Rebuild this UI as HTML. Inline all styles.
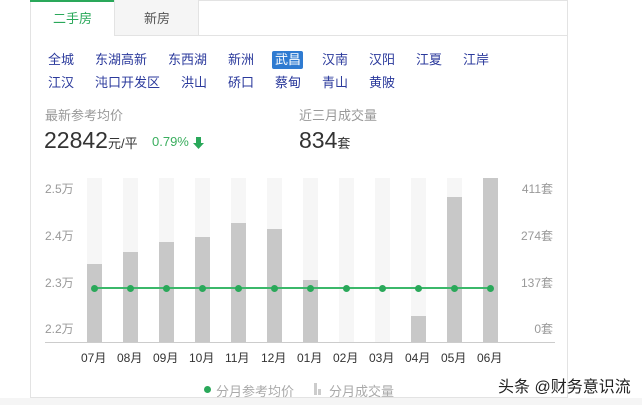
<!DOCTYPE html>
<html><head><meta charset="utf-8"><style>
body{margin:0;width:642px;height:405px;background:#fff;font-family:"Liberation Sans","Noto Sans CJK SC",sans-serif;position:relative;overflow:hidden}
.a{position:absolute;white-space:nowrap}
.d{font-size:13px;color:#2b3a9c;line-height:16px}
.g{color:#999;font-size:13px}
.bg{position:absolute;width:15px;top:178px;height:164px;background:#f6f6f6}
.f{position:absolute;width:15px;background:#c8c8c8;bottom:63px}
.dot{position:absolute;width:7px;height:7px;border-radius:50%;background:#2aa85a;top:284px}
.yl{font-size:12px;color:#999}
.ml{font-size:12px;color:#333;top:349px}
</style></head><body>
<div class="a" style="left:30px;top:0;width:538px;height:398px;border:1px solid #e3e3e3;border-top:none;box-sizing:border-box"></div>
<div class="a" style="left:30px;top:0;width:84px;height:2px;background:#2aa85a"></div>
<div class="a" style="left:114px;top:0;width:85px;height:35px;background:#f5f5f5;border-left:1px solid #e3e3e3;border-right:1px solid #e3e3e3;box-sizing:border-box"></div>
<div class="a" style="left:199px;top:0;width:369px;height:1px;background:#e3e3e3"></div>
<div class="a" style="left:114px;top:35px;width:454px;height:1px;background:#e3e3e3"></div>
<div class="a" style="left:53px;top:8px;font-size:13px;color:#2aa85a">二手房</div>
<div class="a" style="left:144px;top:8px;font-size:13px;color:#555">新房</div>

<div class="a" style="left:272px;top:51px;width:31px;height:18px;background:#2f7bd1;border-radius:2px"></div>
<div class="a d" style="left:48px;top:52px">全城</div>
<div class="a d" style="left:95px;top:52px">东湖高新</div>
<div class="a d" style="left:168px;top:52px">东西湖</div>
<div class="a d" style="left:228px;top:52px">新洲</div>
<div class="a d" style="left:275px;top:52px;color:#fff">武昌</div>
<div class="a d" style="left:322px;top:52px">汉南</div>
<div class="a d" style="left:369px;top:52px">汉阳</div>
<div class="a d" style="left:416px;top:52px">江夏</div>
<div class="a d" style="left:463px;top:52px">江岸</div>
<div class="a d" style="left:48px;top:75px">江汉</div>
<div class="a d" style="left:95px;top:75px">沌口开发区</div>
<div class="a d" style="left:181px;top:75px">洪山</div>
<div class="a d" style="left:228px;top:75px">硚口</div>
<div class="a d" style="left:275px;top:75px">蔡甸</div>
<div class="a d" style="left:322px;top:75px">青山</div>
<div class="a d" style="left:369px;top:75px">黄陂</div>

<div class="a g" style="left:45px;top:105px">最新参考均价</div>
<div class="a" style="left:44px;top:127px;font-size:23px;color:#333">22842<span style="font-size:13px">元/平</span></div>
<div class="a" style="left:152px;top:134px;font-size:13px;color:#3aae5e">0.79%</div>
<svg class="a" style="left:193px;top:137px" width="11" height="12"><path d="M3 0h5v6h3l-5.5 6L0 6h3z" fill="#2aa85a"/></svg>
<div class="a g" style="left:299px;top:105px">近三月成交量</div>
<div class="a" style="left:299px;top:127px;font-size:23px;color:#333">834<span style="font-size:13px">套</span></div>

<div class="a yl" style="left:45px;top:180px">2.5万</div>
<div class="a yl" style="left:45px;top:227px">2.4万</div>
<div class="a yl" style="left:45px;top:274px">2.3万</div>
<div class="a yl" style="left:45px;top:320px">2.2万</div>
<div class="a yl" style="right:89px;top:180px">411套</div>
<div class="a yl" style="right:89px;top:227px">274套</div>
<div class="a yl" style="right:89px;top:274px">137套</div>
<div class="a yl" style="right:89px;top:320px">0套</div>

<div class="bg" style="left:87px"></div><div class="f" style="left:87px;top:264px"></div>
<div class="bg" style="left:123px"></div><div class="f" style="left:123px;top:252px"></div>
<div class="bg" style="left:159px"></div><div class="f" style="left:159px;top:242px"></div>
<div class="bg" style="left:195px"></div><div class="f" style="left:195px;top:237px"></div>
<div class="bg" style="left:231px"></div><div class="f" style="left:231px;top:223px"></div>
<div class="bg" style="left:267px"></div><div class="f" style="left:267px;top:229px"></div>
<div class="bg" style="left:303px"></div><div class="f" style="left:303px;top:280px"></div>
<div class="bg" style="left:339px"></div>
<div class="bg" style="left:375px"></div>
<div class="bg" style="left:411px"></div><div class="f" style="left:411px;top:316px"></div>
<div class="bg" style="left:447px"></div><div class="f" style="left:447px;top:197px"></div>
<div class="bg" style="left:483px"></div><div class="f" style="left:483px;top:178px"></div>
<div class="a" style="left:45px;top:342px;width:510px;height:1px;background:#ccc"></div>
<div class="a" style="left:94px;top:287px;width:396px;height:2px;background:#3bb86a"></div>
<div class="dot" style="left:91px;top:284.5px"></div><div class="dot" style="left:127px;top:284.5px"></div><div class="dot" style="left:163px;top:284.5px"></div><div class="dot" style="left:199px;top:284.5px"></div><div class="dot" style="left:235px;top:284.5px"></div><div class="dot" style="left:271px;top:284.5px"></div><div class="dot" style="left:307px;top:284.5px"></div><div class="dot" style="left:343px;top:284.5px"></div><div class="dot" style="left:379px;top:284.5px"></div><div class="dot" style="left:415px;top:284.5px"></div><div class="dot" style="left:451px;top:284.5px"></div><div class="dot" style="left:487px;top:284.5px"></div>

<div class="a ml" style="left:81px">07月</div><div class="a ml" style="left:117px">08月</div><div class="a ml" style="left:153px">09月</div><div class="a ml" style="left:189px">10月</div><div class="a ml" style="left:225px">11月</div><div class="a ml" style="left:261px">12月</div><div class="a ml" style="left:297px">01月</div><div class="a ml" style="left:333px">02月</div><div class="a ml" style="left:369px">03月</div><div class="a ml" style="left:405px">04月</div><div class="a ml" style="left:441px">05月</div><div class="a ml" style="left:477px">06月</div>

<div class="a" style="left:204px;top:386px;width:7px;height:7px;border-radius:50%;background:#2aa85a"></div>
<div class="a" style="left:216px;top:381px;font-size:13px;color:#aaa">分月参考均价</div>
<div class="a" style="left:314px;top:383px;width:3px;height:12px;background:#ccc"></div>
<div class="a" style="left:318px;top:389px;width:3px;height:6px;background:#ccc"></div>
<div class="a" style="left:329px;top:381px;font-size:13px;color:#aaa">分月成交量</div>
<div class="a" style="left:0;top:398px;width:642px;height:7px;background:#f5f5f5"></div>
<div class="a" style="left:498px;top:373px;font-size:16px;color:#222;text-shadow:0 0 2px #fff">头条 @财务意识流</div>
</body></html>
